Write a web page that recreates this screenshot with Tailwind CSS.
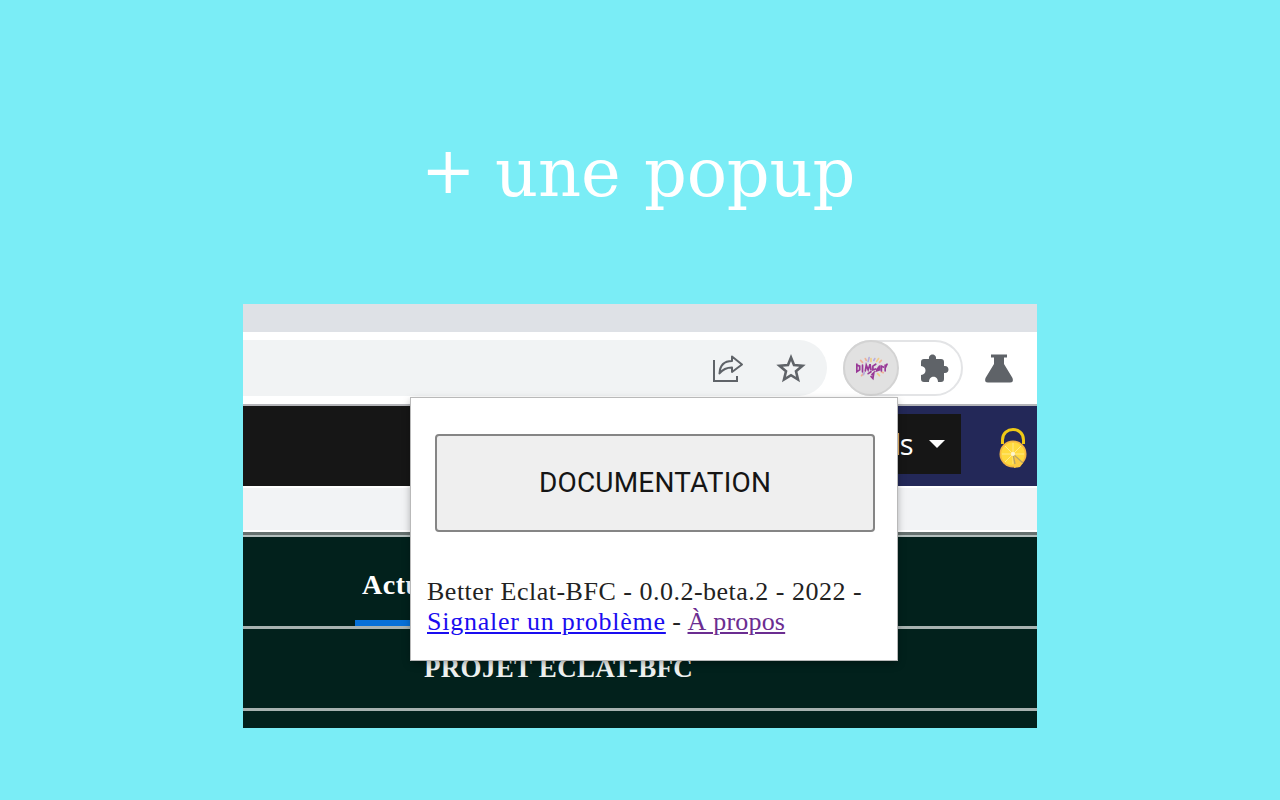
<!DOCTYPE html>
<html lang="fr">
<head>
<meta charset="utf-8">
<title>Better Eclat-BFC</title>
<script src="https://cdn.jsdelivr.net/npm/@tailwindcss/browser@4"></script>
</head>
<body class="w-[1280px] h-[800px] overflow-hidden bg-[#7aedf6] flex flex-col items-center">
  <h1 class="h-[304px] w-[794px] pl-[178px] pt-[131px] leading-[84px] text-[67px] tracking-[-0.2px] text-white whitespace-nowrap font-['DejaVu_Serif',serif] flex">
    <span class="w-[74px] -mt-[2px] text-[65px]">+</span><span class="w-[149px]">une</span><span>popup</span>
  </h1>

  <main class="relative w-[794px] h-[424px] flex flex-col overflow-hidden bg-[#02211c]">
    <div class="h-7 shrink-0 bg-[#dee1e6]"></div>

    <div class="h-[74px] shrink-0 bg-white flex items-start pt-2 border-b-2 border-[#b4b5b9]">
      <div class="w-[584px] h-14 bg-[#f1f3f4] rounded-r-full flex items-center justify-end pr-[21px] gap-[32px]">
        <svg class="w-8 h-8" viewBox="0 0 32 32" fill="none" stroke="#5f6368" stroke-width="2">
          <path d="M2 8V29H25V24"/>
          <path stroke-linejoin="round" d="M7.500 21.500C8 12 13 9 20 9V4.500L30 12.500L20 20V15.500C14 15.500 11 17 7.500 21.500Z"/>
        </svg>
        <svg class="w-[30px] h-[30px]" viewBox="0 0 30 30" fill="none" stroke="#5f6368" stroke-width="2.600">
          <path d="M15 4.500L18 12L26.500 12.700L20 18.300L22 26.500L15 22.200L8 26.500L10 18.300L3.500 12.700L12 12Z"/>
        </svg>
      </div>
      <div class="ml-4 w-[120px] h-14 rounded-full border-2 border-[#e3e4e6] flex items-center">
        <div class="-ml-[2px] w-14 h-14 shrink-0 rounded-full bg-[#e1e1e1] border-2 border-[#d3d3d3] flex items-center justify-center">
          <svg class="w-[34px] h-7" viewBox="0 0 36 28" fill="none" stroke-linecap="round">
            <g stroke-width="1.800" opacity="0.750">
              <path stroke="#f3a27e" d="M9 8L7 6M13 6L12 4M27 8L29 6M29 18L31 19M10 20L8 22"/>
              <path stroke="#f6c66c" d="M18 7V4M24 7L26 4M25 20L27 22"/>
              <path stroke="#a99bdd" d="M15 7L16 3M11 19L10 21M21 6L22 4"/>
            </g>
            <g stroke="#92278f" stroke-width="1.800" opacity="0.900">
              <path d="M3 10V18L6 16V12L3 11M9 11V18M12 17L13 11L15 16L17 10L18 16M23 10L20 12V16L23 15M26 13L24 17L27 16V12M29 17V12L31 13M33 11V17M33 14L35 10"/>
              <path d="M15 20L18 18M19 21L21 19L20 25L18 23"/>
            </g>
          </svg>
        </div>
        <svg class="ml-[19px] w-8 h-8" viewBox="0 0 32 32" fill="#5f6368">
          <path d="M11 7C10 1 19 1 18 7H23Q26 7 26 10V14C32 13 32 22 26 21V27Q26 30 23 30H20C20 23 11 23 11 30H6Q3 30 3 27V23C9 23 9 14 3 14V10Q3 7 6 7Z"/>
        </svg>
      </div>
      <svg class="ml-[21px] mt-3 w-[30px] h-8" viewBox="0 0 30 32" fill="#5f6368">
        <path d="M7 2.500H23V5.500H20V12L28.500 26Q30 30.500 26 30.500H4Q0 30.500 1.500 26L10 12V5.500H7Z"/>
      </svg>
    </div>

    <div class="h-[80px] shrink-0 flex bg-[#232858]">
      <div class="w-[300px] bg-[#161616]"></div>
      <div class="w-[418px] h-[60px] mt-2 bg-[#161616] flex items-center justify-end pr-4 gap-4">
        <span class="text-white text-[29px] leading-[60px] -tracking-[1.5px] pr-[1px] font-['Open_Sans',sans-serif]">ls</span>
        <svg class="w-4 h-2" viewBox="0 0 16 8"><path fill="#fff" d="M0 0H16L8 8Z"/></svg>
      </div>
      <svg class="ml-[37px] mt-[20px] w-[30px] h-[44px]" viewBox="0 0 30 44">
        <path d="M4.500 18V14C4.500 0 25.500 0 25.500 14V18" fill="none" stroke="#eec916" stroke-width="3"/>
        <circle cx="15" cy="28" r="13.500" fill="#f5b743"/>
        <circle cx="15" cy="28" r="11.800" fill="#ffda3e"/>
        <g stroke="#ffe98b" stroke-width="1"><path d="M15 17V38M4 28H26M7 20L23 36M7 36L23 20"/></g>
        <path d="M15 28L25 37L22 41L16 42Z" fill="#fccb42"/>
        <path d="M15 28L25 37M15 28L17 38" stroke="#b8a566" stroke-width="1.300"/>
        <circle cx="15" cy="28" r="2" fill="#fff6d0"/>
      </svg>
    </div>

    <div class="h-[46px] shrink-0 bg-[#f2f3f5] border-y-2 border-white"></div>
    <div class="h-[5px] shrink-0 bg-[#66716f] border-b-2 border-[#b4bfbd]"></div>
    <div class="h-[89px] shrink-0 pl-[112px] flex">
      <div class="w-[150px] border-b-[6px] border-[#0670d8] pl-[7px] pt-[28px] text-[28px] leading-[40px] tracking-[0.5px] font-bold text-white font-['Liberation_Serif',serif]">Actu</div>
    </div>
    <div class="h-[85px] shrink-0 border-y-3 border-[#a7b2b0] pl-[181px] text-[#eef1f0] text-[27px] leading-[78px] whitespace-nowrap font-bold font-['Liberation_Serif',serif]"><span class="tracking-[0.3px]">PROJET ECLAT-BFC</span></div>

    <section class="absolute left-[168px] top-[94px] w-[486px] h-[262px] bg-white shadow-[0_0_0_1px_#b9b9b9,0_3px_8px_rgba(0,0,0,0.35)] flex flex-col">
      <button class="ml-6 mt-9 w-[440px] h-[98px] shrink-0 rounded-[4px] border-2 border-[#858585] bg-[#efefef] text-[#151515] text-[28px] font-['Roboto',sans-serif]"><span class="tracking-[0.2px]">DOCUMENTATION</span></button>
      <p class="ml-4 mt-[45px] text-[26px] leading-[30px] whitespace-nowrap text-[#222] font-['Liberation_Serif',serif]">
        <span class="tracking-[0.5px]">Better Eclat-BFC - 0.0.2-beta.2 - 2022 -</span><br>
        <span><a class="underline tracking-[0.75px] text-[#1a0df0]">Signaler un problème</a> - <a class="underline tracking-[0.2px] text-[#6b2d91]">À propos</a></span>
      </p>
    </section>
  </main>
</body>
</html>
